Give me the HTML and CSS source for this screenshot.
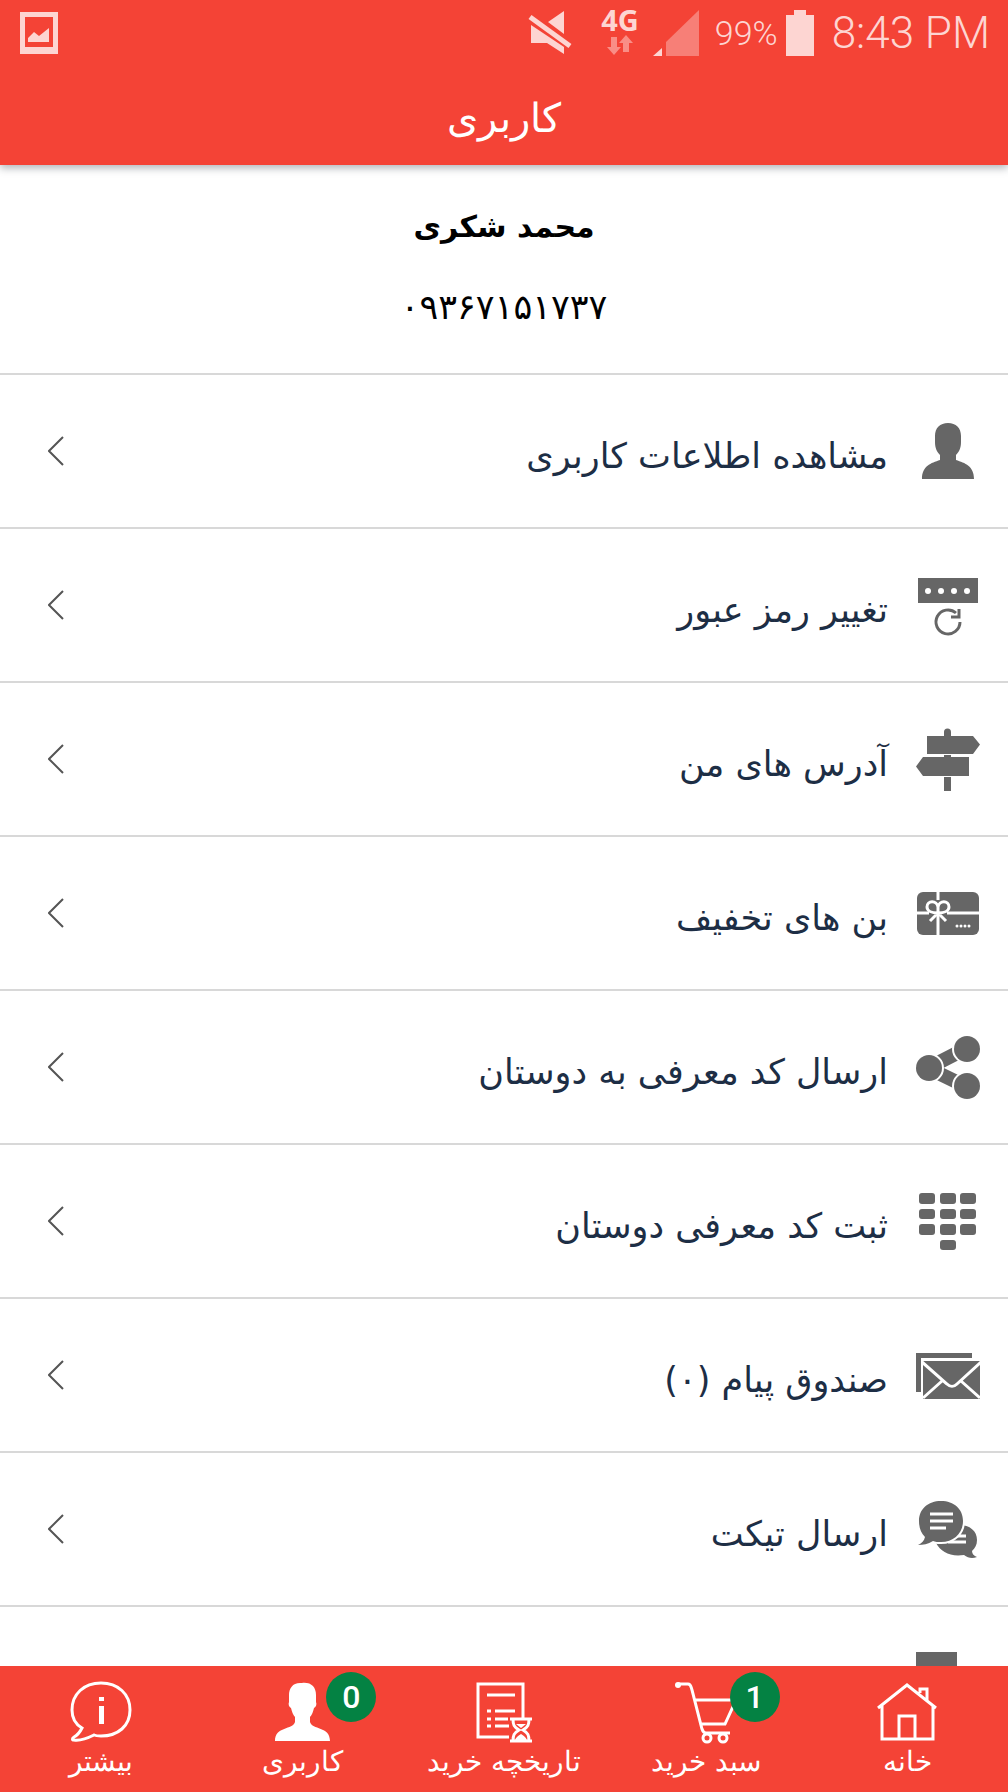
FILE: index.html
```
<!DOCTYPE html>
<html lang="fa" dir="rtl">
<head>
    <meta charset="UTF-8">
    <meta name="viewport" content="width=device-width, initial-scale=1.0">
    <title>کاربری</title>
    <link rel="stylesheet" href="styles.css">
</head>
<body>
    <header class="app-header">
        <!-- Status bar -->
        <div class="status-bar" dir="ltr">
            <svg class="status-picture" width="38" height="42" viewBox="0 0 38 42">
                <path fill-rule="evenodd" d="M0 0h38v42H0zM5 5v30h28V5z"/>
                <path d="M8 26l6-6 5 4 10-8v14H8z"/>
            </svg>
            <svg class="status-mute" width="46" height="46" viewBox="0 0 46 46">
                <path d="M37 1v23L21 12zM4 15l33 22v7L20 33H4z"/>
                <path class="mute-slash" d="M3 7l40 29"/>
            </svg>
            <div class="network">
                <span class="network-type">4G</span>
                <svg width="28" height="22" viewBox="0 0 28 22">
                    <path d="M5 3h6v10h4L8 21 1 13h4zM17 18h6V9h4L20 1l-7 8h4z"/>
                </svg>
            </div>
            <svg class="status-signal" width="46" height="46" viewBox="0 0 46 46">
                <path class="signal-empty" d="M13 46V32L46 0v46z"/>
                <path d="M0 46l9-8v8z"/>
            </svg>
            <span class="battery-level">99%</span>
            <svg class="status-battery" width="28" height="46" viewBox="0 0 28 46">
                <path d="M8 0h12v5h8v41H0V5h8z"/>
            </svg>
            <span class="clock">8:43 PM</span>
        </div>
        <h1 class="page-title">کاربری</h1>
    </header>

    <main class="content">
        <section class="profile">
            <h2 class="profile-name">محمد شکری</h2>
            <p class="profile-phone">۰۹۳۶۷۱۵۱۷۳۷</p>
        </section>

        <nav class="menu">
            <a href="#" class="menu-item">
                <svg class="menu-icon" viewBox="0 0 64 64">
                    <path d="M32 4c8 0 13 5 13 13v6c0 6-2 10-5 13v5c9 3 18 6 18 19H6c0-13 9-16 18-19v-5c-3-3-5-7-5-13v-6c0-8 5-13 13-13z"/>
                </svg>
                <span class="menu-label">مشاهده اطلاعات کاربری</span>
                <svg class="chevron" viewBox="0 0 16 32"><path d="M15 2L1 16l14 14"/></svg>
            </a>
            <a href="#" class="menu-item">
                <svg class="menu-icon" viewBox="0 0 64 64">
                    <path d="M2 5h60v25H2z"/>
                    <g class="cut-fill">
                        <circle cx="12" cy="18" r="3"/><circle cx="25" cy="18" r="3"/>
                        <circle cx="38" cy="18" r="3"/><circle cx="51" cy="18" r="3"/>
                    </g>
                    <path class="line" d="M44 49a12 12 0 1 1-4-9M43 36v8h-8"/>
                </svg>
                <span class="menu-label">تغییر رمز عبور</span>
                <svg class="chevron" viewBox="0 0 16 32"><path d="M15 2L1 16l14 14"/></svg>
            </a>
            <a href="#" class="menu-item">
                <svg class="menu-icon" viewBox="0 0 64 64">
                    <path d="M28 9V5a3 3 0 0 1 7 0v4h22l7 8.500-7 9.500H11V9zM28 28h7v2h18v19H7l-7-9.500L7 30h21zM28 50h7v14h-7z"/>
                </svg>
                <span class="menu-label">آدرس های من</span>
                <svg class="chevron" viewBox="0 0 16 32"><path d="M15 2L1 16l14 14"/></svg>
            </a>
            <a href="#" class="menu-item">
                <svg class="menu-icon" viewBox="0 0 64 64">
                    <rect x="1" y="11" width="62" height="43" rx="6"/>
                    <path class="cut-line" d="M22 11v8M22 33v21M1 32h12M31 32h32"/>
                    <path class="cut-line" d="M22 32l-8 8M22 32l8 8M22 32c-6 0-11-2-11-6 0-7 10-7 11 0v6c6 0 11-2 11-6 0-7-10-7-11 0"/>
                    <g class="cut-fill">
                        <circle cx="41" cy="45" r="1.500"/><circle cx="45" cy="45" r="1.500"/>
                        <circle cx="49" cy="45" r="1.500"/><circle cx="53" cy="45" r="1.500"/>
                    </g>
                </svg>
                <span class="menu-label">بن های تخفیف</span>
                <svg class="chevron" viewBox="0 0 16 32"><path d="M15 2L1 16l14 14"/></svg>
            </a>
            <a href="#" class="menu-item">
                <svg class="menu-icon" viewBox="0 0 64 64">
                    <path class="share-link" d="M51 13L12 33l39 19"/>
                    <g class="share-dots">
                        <circle cx="13" cy="33" r="13"/><circle cx="51" cy="14" r="13"/><circle cx="51" cy="51" r="13"/>
                    </g>
                </svg>
                <span class="menu-label">ارسال کد معرفی به دوستان</span>
                <svg class="chevron" viewBox="0 0 16 32"><path d="M15 2L1 16l14 14"/></svg>
            </a>
            <a href="#" class="menu-item">
                <svg class="menu-icon" viewBox="0 0 64 64">
                    <rect x="3" y="4" width="16" height="11" rx="3"/><rect x="24" y="4" width="16" height="11" rx="3"/><rect x="44" y="4" width="16" height="11" rx="3"/>
                    <rect x="3" y="20" width="16" height="10" rx="3"/><rect x="24" y="20" width="16" height="10" rx="3"/><rect x="44" y="20" width="16" height="10" rx="3"/>
                    <rect x="3" y="35" width="16" height="11" rx="3"/><rect x="24" y="35" width="16" height="11" rx="3"/><rect x="44" y="35" width="16" height="11" rx="3"/>
                    <rect x="24" y="51" width="16" height="10" rx="3"/>
                </svg>
                <span class="menu-label">ثبت کد معرفی دوستان</span>
                <svg class="chevron" viewBox="0 0 16 32"><path d="M15 2L1 16l14 14"/></svg>
            </a>
            <a href="#" class="menu-item">
                <svg class="menu-icon" viewBox="0 0 64 64">
                    <path d="M0 10h56v5H5v34H0zM7 18h57v38H7z"/>
                    <path class="cut-line" d="M6 19l25 22c3 3 7 3 10 0l24-22M7 55l19-17M64 55L45 38"/>
                </svg>
                <span class="menu-label">صندوق پیام (۰)</span>
                <svg class="chevron" viewBox="0 0 16 32"><path d="M15 2L1 16l14 14"/></svg>
            </a>
            <a href="#" class="menu-item">
                <svg class="menu-icon" viewBox="0 0 64 64">
                    <path d="M43 28c11 0 18 6 18 15 0 5-2 8-5 11 0 3 2 5 5 6-5 2-9 1-13-2-14 2-23-3-28-12z"/>
                    <path class="cut-line" d="M36 39h14M32 45h18"/>
                    <path class="bubble" d="M25 4c13 0 22 8 22 20S38 45 25 45c-3 0-6 0-8-1-5 3-10 4-15 4 4-2 6-4 7-8-4-4-6-9-6-16C3 12 12 4 25 4z"/>
                    <path class="cut-line" d="M14 17h23M14 24h23M14 31h16"/>
                </svg>
                <span class="menu-label">ارسال تیکت</span>
                <svg class="chevron" viewBox="0 0 16 32"><path d="M15 2L1 16l14 14"/></svg>
            </a>
            <a href="#" class="menu-item">
                <svg class="menu-icon" viewBox="0 0 64 64">
                    <path d="M0 1h41v62H0z"/>
                </svg>
            </a>
        </nav>
    </main>

    <!-- Bottom tabs -->
    <nav class="tab-bar">
        <a href="#" class="tab">
            <svg class="tab-icon" viewBox="0 0 64 64">
                <path d="M3 28L32 5l29 23M7 25v34h51V25M24 59V36h16v23M45 13V9h7v11"/>
            </svg>
            <span>خانه</span>
        </a>
        <a href="#" class="tab">
            <svg class="tab-icon" viewBox="0 0 64 64">
                <path d="M3 5l2-1h9c3 0 3 3 4 6l10 39c1 3 2 4 4 4h24M20 20h42l-11 24H27"/>
                <circle cx="33" cy="58" r="4"/><circle cx="49" cy="58" r="4"/>
                <circle class="solid" cx="4" cy="5" r="3"/>
            </svg>
            <span>سبد خرید</span>
            <span class="badge">1</span>
        </a>
        <a href="#" class="tab">
            <svg class="tab-icon" viewBox="0 0 64 64">
                <path d="M37 57H6V4h45v34M15 15h28M15 31h4M23 31h20M15 39h4M23 39h13M15 46h4M23 46h14M38 39h22M38 61h22M41 39c0 6 1 8 6 11-5 3-6 5-6 11M57 39c0 6-1 8-6 11 5 3 6 5 6 11"/>
                <path class="solid" d="M44 44h10l-5 4zM43 61c0-3 3-5 6-7 3 2 6 4 6 7z"/>
            </svg>
            <span>تاریخچه خرید</span>
        </a>
        <a href="#" class="tab">
            <svg class="tab-icon" viewBox="0 0 64 64">
                <path class="solid" d="M32 3c9-1 14 4 14 12v7c1 2 0 5-2 6-1 4-2 7-4 9v5c2 8 20 4 20 19H5c0-15 18-11 20-19v-5c-2-2-3-5-4-9-2-1-3-4-2-6v-7c0-7 4-13 13-12z"/>
            </svg>
            <span>کاربری</span>
            <span class="badge">0</span>
        </a>
        <a href="#" class="tab">
            <svg class="tab-icon" viewBox="0 0 64 64">
                <path d="M32 3c17 0 29 11 29 27S49 56 32 56c-3 0-5 0-7-1-8 4-14 6-20 5-2 0-2-2 0-3 4-2 6-5 8-9C6 44 3 38 3 30 3 14 15 3 32 3z"/>
                <path class="solid" d="M30 17h5v4h-5zM30 26h5v18h-5z"/>
            </svg>
            <span>بیشتر</span>
        </a>
    </nav>
</body>
</html>
```
FILE: styles.css
```
* {
    box-sizing: border-box;
}

body {
    margin: 0;
    height: 100vh;
    display: flex;
    flex-direction: column;
    font-family: "DejaVu Sans", sans-serif;
    background-color: #fff;
    color: #000;
}

svg {
    display: block;
    flex-shrink: 0;
}

a {
    text-decoration: none;
}

/* Header */
.app-header {
    background-color: #f44336;
    color: #fff;
    padding-bottom: 14px;
    box-shadow: 0 3px 8px rgba(60, 70, 80, 0.4);
    z-index: 1;
}

.status-bar {
    display: flex;
    align-items: center;
    height: 66px;
    padding: 0 18px 0 20px;
    font-family: Roboto, sans-serif;
    font-weight: 300;
    color: #fdd5d2;
    fill: #fdd5d2;
}

.status-picture {
    margin-right: auto;
}

.mute-slash {
    fill: none;
    stroke: #fdd5d2;
    stroke-width: 5;
}

.network {
    display: flex;
    flex-direction: column;
    align-items: center;
    margin-left: 28px;
    padding-bottom: 4px;
}

.network svg {
    fill: #f98e86;
}

.network-type {
    font: bold 29px/28px "Open Sans", sans-serif;
}

.status-signal {
    margin-left: 14px;
}

.signal-empty {
    fill: #f77f77;
}

.battery-level {
    font-size: 34px;
    margin-left: 16px;
}

.status-battery {
    margin: 0 18px 0 8px;
}

.clock {
    font-size: 44px;
}

.page-title {
    margin: 0;
    padding-top: 20px;
    font-size: 40px;
    line-height: 65px;
    font-weight: 200;
    text-align: center;
}

/* Profile block */
.content {
    flex: 1;
    min-height: 0;
    overflow-y: auto;
    scrollbar-width: none;
}

.profile {
    padding: 32px 0 36px;
    text-align: center;
}

.profile-name,
.profile-phone {
    margin: 0;
    font-size: 30px;
    line-height: 60px;
}

.profile-phone {
    padding-top: 20px;
    font-size: 35px;
}

/* Menu rows */
.menu-item {
    display: flex;
    align-items: center;
    gap: 28px;
    height: 154px;
    padding: 0 28px 0 48px;
    border-top: 2px solid #d8d8d8;
    color: #1d2e45;
}

.menu-icon {
    width: 64px;
    height: 64px;
    fill: #666;
}

.menu-label {
    flex: 1;
    padding-top: 10px;
    font-size: 35px;
}

.line {
    fill: none;
    stroke: #666;
    stroke-width: 3;
}

.cut-fill {
    fill: #fff;
}

.cut-line {
    fill: none;
    stroke: #fff;
    stroke-width: 3;
}

.share-link {
    fill: none;
    stroke: #666;
    stroke-width: 14;
}

.share-dots,
.bubble {
    stroke: #fff;
    stroke-width: 4;
    paint-order: stroke;
}

.chevron {
    width: 16px;
    height: 32px;
    fill: none;
    stroke: #555;
    stroke-width: 2;
}

/* Bottom tabs */
.tab-bar {
    display: flex;
    height: 126px;
    background-color: #f44336;
}

.tab {
    position: relative;
    flex: 1;
    display: flex;
    flex-direction: column;
    align-items: center;
    padding-top: 14px;
    font-size: 28px;
    line-height: 36px;
    font-weight: 200;
    color: #fff;
}

.tab-icon {
    width: 64px;
    height: 64px;
    fill: none;
    stroke: #fff;
    stroke-width: 3;
}

.solid {
    fill: #fff;
    stroke: none;
}

.badge {
    position: absolute;
    top: 6px;
    left: calc(50% + 24px);
    width: 50px;
    height: 50px;
    border-radius: 50%;
    background-color: #048243;
    font: 500 32px/50px Roboto, sans-serif;
    text-align: center;
}
```
